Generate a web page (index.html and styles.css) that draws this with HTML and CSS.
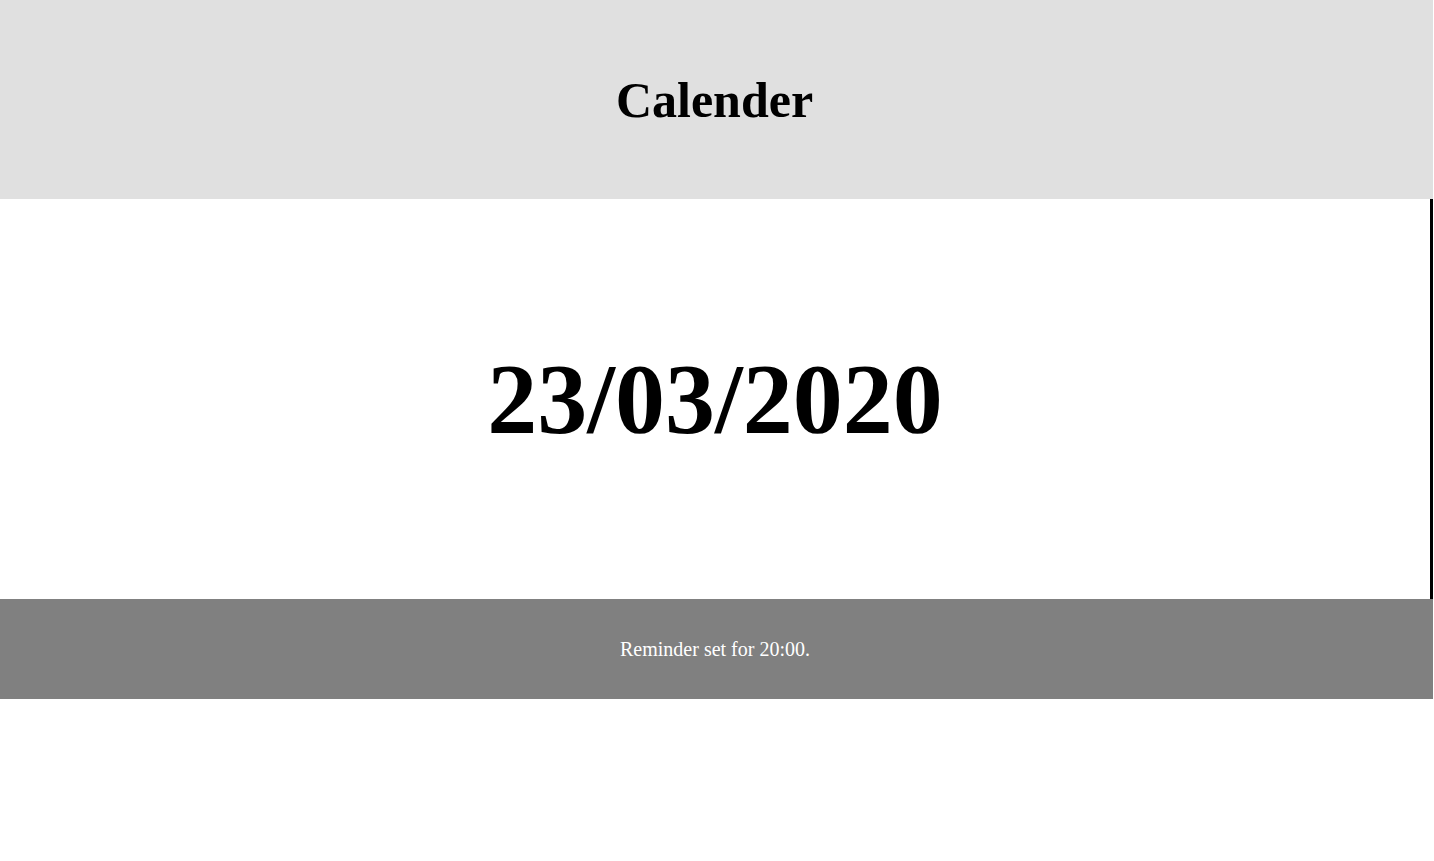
FILE: index.html
```html
<!DOCTYPE html>
<html>
<head>
<meta charset="utf-8">
<link rel="stylesheet" href="styles.css">
</head>
<body>
<div class="page">
  <header class="header"><h1 class="title">Calender</h1></header>
  <main class="main"><div class="date">23/03/2020</div></main>
  <footer class="footer"><p class="note">Reminder set for 20:00.</p></footer>
</div>
</body>
</html>
```
FILE: styles.css
```css
html, body {
  margin: 0;
  padding: 0;
  background: #ffffff;
  font-family: "Liberation Serif", "Times New Roman", serif;
}
.page {
  width: 1433px;
  display: flex;
  flex-direction: column;
}
.header {
  height: 199px;
  background: #e0e0e0;
  display: flex;
  align-items: center;
  justify-content: center;
  padding-right: 4px;
}
.title {
  margin: 0;
  font-size: 50px;
  font-weight: bold;
  color: #000;
  line-height: 1;
}
.main {
  height: 400px;
  box-sizing: border-box;
  border-right: 3px solid #000;
  display: flex;
  align-items: center;
  justify-content: center;
}
.date {
  font-size: 100px;
  font-weight: bold;
  color: #000;
  line-height: 1;
}
.footer {
  height: 100px;
  background: #808080;
  display: flex;
  align-items: center;
  justify-content: center;
  padding-right: 3px;
}
.note {
  margin: 0;
  font-size: 20px;
  color: #ffffff;
  line-height: 1;
}
```
